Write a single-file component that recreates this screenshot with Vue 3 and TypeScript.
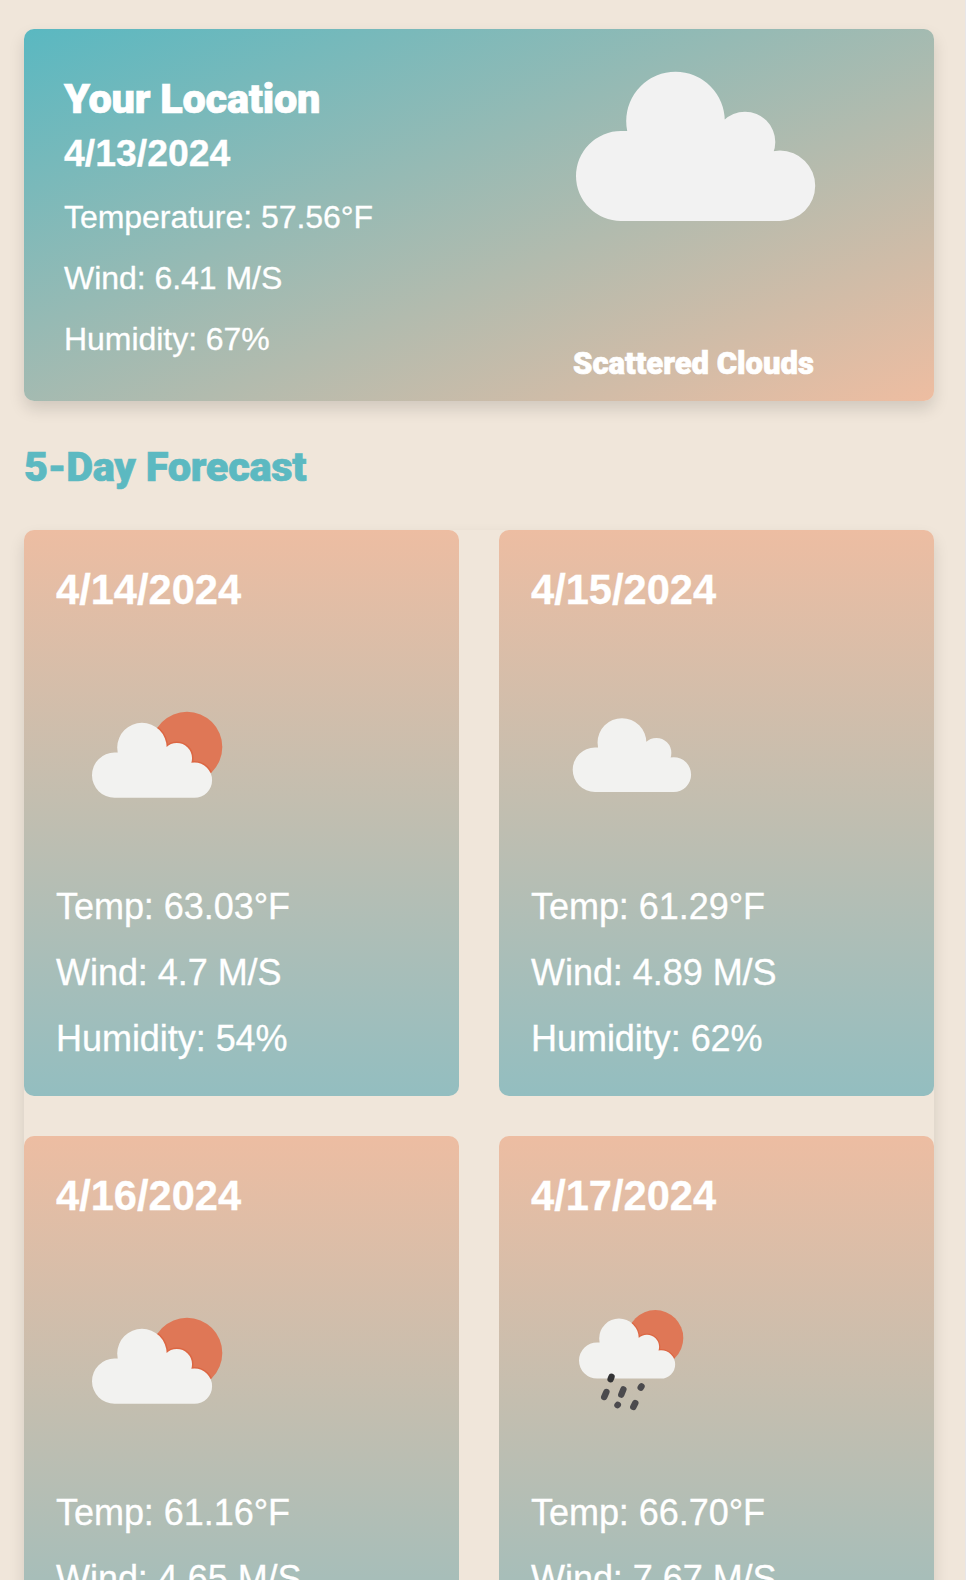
<script setup lang="ts">
type Sky = 'clouds' | 'sun' | 'rain'

interface Day {
  date: string
  sky: Sky
  temp: string
  wind: string
  humidity: string
}

const days: Day[] = [
  { date: '4/14/2024', sky: 'sun', temp: '63.03', wind: '4.7', humidity: '54' },
  { date: '4/15/2024', sky: 'clouds', temp: '61.29', wind: '4.89', humidity: '62' },
  { date: '4/16/2024', sky: 'sun', temp: '61.16', wind: '4.65', humidity: '58' },
  { date: '4/17/2024', sky: 'rain', temp: '66.70', wind: '7.67', humidity: '49' },
]

// Four overlapping discs on a flat base
const disc = (x: number, y: number, r: number) =>
  `M${x - r} ${y}a${r} ${r} 0 1 1 ${2 * r} 0a${r} ${r} 0 1 1 ${-2 * r} 0Z`
const cloud =
  disc(45, 105, 45) +
  disc(99.5, 50, 49.3) +
  disc(169, 71, 30.3) +
  disc(204, 114.8, 35.2) +
  'M45 100V60H60V50H145L190 82H204V150H45Z'

const placement: Record<Sky, string> = {
  clouds: 'translate(41.7 61.8) scale(.495)',
  sun: 'translate(36 66.5) scale(.502)',
  rain: 'translate(48 56.3) scale(.402)',
}
</script>

<template>
  <main class="page">
    <section class="today">
      <div class="today-info">
        <h1 class="heavy">Your Location</h1>
        <h2>4/13/2024</h2>
        <p>Temperature: 57.56°F</p>
        <p>Wind: 6.41 M/S</p>
        <p>Humidity: 67%</p>
      </div>
      <div class="today-sky">
        <svg class="big-cloud" viewBox="0 0 240 151"><path :d="cloud" fill="#f2f2f2" /></svg>
        <span class="heavy">Scattered Clouds</span>
      </div>
    </section>

    <h2 class="forecast-title heavy">5-Day Forecast</h2>

    <section class="forecast">
      <article v-for="day in days" :key="day.date" class="card">
        <h3>{{ day.date }}</h3>
        <svg class="icon" viewBox="0 0 200 200">
          <defs>
            <clipPath :id="'disc-' + day.sky">
              <circle v-if="day.sky === 'sun'" cx="131" cy="91" r="35.3" />
              <circle v-else cx="124.3" cy="76" r="28" />
            </clipPath>
          </defs>
          <template v-if="day.sky !== 'clouds'">
            <circle v-if="day.sky === 'sun'" cx="131" cy="91" r="35.3" fill="#df7756" />
            <circle v-else cx="124.3" cy="76" r="28" fill="#df7756" />
            <g :clip-path="'url(#disc-' + day.sky + ')'">
              <path :d="cloud" :transform="placement[day.sky]" fill="none" stroke="#dc6743" stroke-width="6" />
            </g>
          </template>
          <path :d="cloud" :transform="placement[day.sky]" fill="#f2f2f0" />
          <g v-if="day.sky === 'rain'" stroke="#4b4a4d" stroke-width="6.4" stroke-linecap="round">
            <path stroke="#333335" d="M79.6 117.2L80.5 114.8" />
            <path d="M73.2 135L75.4 130" />
            <path d="M90.3 132.6L92.4 127.4" />
            <path d="M86.5 143.2L86.8 142.8" />
            <path d="M102.3 145L104.3 141" />
            <path d="M109.7 125.6L110.5 124.4" />
          </g>
        </svg>
        <p>Temp: {{ day.temp }}°F</p>
        <p>Wind: {{ day.wind }} M/S</p>
        <p>Humidity: {{ day.humidity }}%</p>
      </article>
    </section>
  </main>
</template>

<style>
html,
body {
  margin: 0;
  background: #f0e6da;
}
body {
  height: 1580px;
  overflow: hidden;
}
</style>

<style scoped>
.page {
  box-sizing: border-box;
  width: 966px;
  height: 1580px;
  overflow: hidden;
  padding: 29px 31px 0 24px;
  border-right: 1px solid #e8e6e8;
  background: #f0e6da;
  color: #fff;
  font-family: 'Liberation Sans', Arial, sans-serif;
}
h1,
h2,
h3,
p {
  margin: 0;
}
h2,
h3,
p {
  -webkit-text-stroke: 0.3px currentColor;
}
.today {
  box-sizing: border-box;
  display: flex;
  width: 910px;
  height: 372px;
  padding: 43px 40px 0;
  border-radius: 10px;
  background: linear-gradient(to bottom right, #5ab8c1, #eebda1);
  box-shadow: 0 8px 16px rgba(0, 0, 0, 0.13);
}
.today-info {
  width: 505px;
}
.heavy {
  font-family: Roboto, 'Liberation Sans', sans-serif;
  font-weight: 900;
  letter-spacing: -0.25px;
  -webkit-text-stroke: 0.7px currentColor;
}
.today h1 {
  font-size: 41.5px;
  line-height: 54px;
}
.today h2 {
  margin: 1px 0 20px;
  font-size: 37.4px;
  line-height: 52px;
}
.today p {
  margin-bottom: 24px;
  font-size: 32px;
  letter-spacing: -0.04px;
  line-height: 37px;
}
.today-sky {
  display: flex;
  flex-direction: column;
  width: 260px;
}
.big-cloud {
  width: 240px;
  height: 151px;
  margin: -1px 0 0 7px;
}
.today-sky span {
  margin: 122px 0 0 4px;
  font-size: 31px;
  letter-spacing: 0;
  line-height: 40px;
  white-space: nowrap;
}
.forecast-title {
  margin: 41px 0 38px;
  color: #5cb9c1;
  font-size: 41.5px;
  line-height: 50px;
}
.forecast {
  display: grid;
  grid-template-columns: 435px 435px;
  grid-auto-rows: 566px;
  gap: 40px;
  width: 910px;
  height: 1778px;
  border-radius: 10px;
  box-shadow: 0 8px 16px rgba(0, 0, 0, 0.12);
}
.card {
  box-sizing: border-box;
  padding: 36px 32px;
  border-radius: 10px;
  background: linear-gradient(180deg, #edbda2, #c1beb0 50%, #93bec0);
}
.card h3 {
  font-size: 41.6px;
  line-height: 48px;
}
.icon {
  display: block;
  width: 200px;
  height: 200px;
  margin: 42px 0 30px;
}
.card p {
  margin-bottom: 24px;
  font-size: 36px;
  letter-spacing: -0.04px;
  line-height: 42px;
}
</style>
